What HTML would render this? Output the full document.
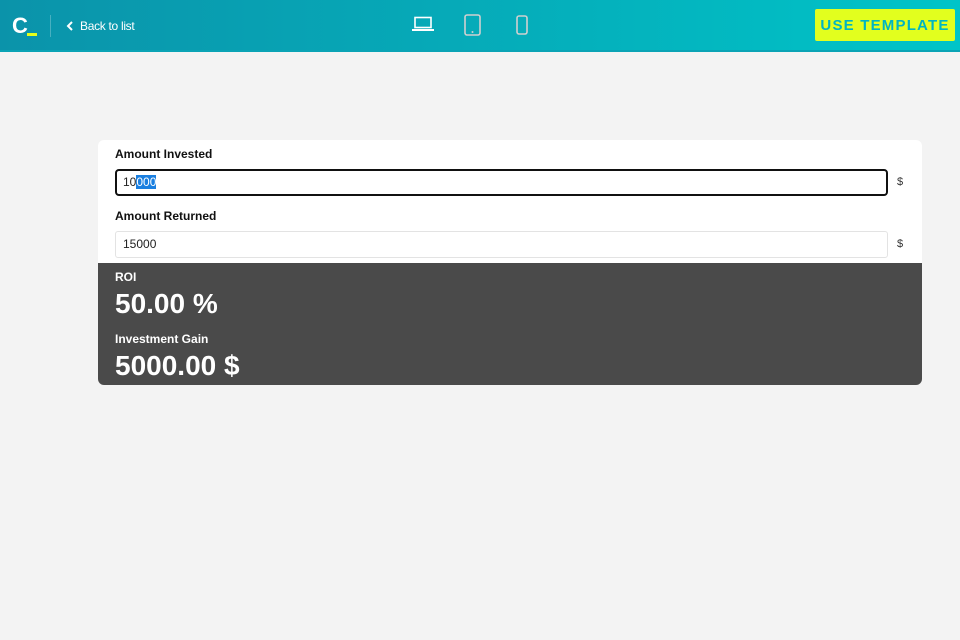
<!DOCTYPE html>
<html><head><style>
*{margin:0;padding:0;box-sizing:border-box}
body{width:960px;height:640px;background:#f3f3f3;font-family:"Liberation Sans",sans-serif;position:relative;overflow:hidden}
.hdr{position:absolute;left:0;top:0;width:960px;height:52px;background:linear-gradient(90deg,#0b93aa,#00c4c8);border-bottom:2px solid #0aa3b5}
.logo{position:absolute;left:12px;top:13px;color:#fff;font:bold 22px "Liberation Sans",sans-serif}
.logo i{position:absolute;left:15px;top:20px;width:10px;height:3px;background:#e5ff1a}
.sep{position:absolute;left:50px;top:15px;width:1px;height:22px;background:rgba(255,255,255,.25)}
.back{position:absolute;left:66px;top:19px;color:#fff;font:12px "Liberation Sans",sans-serif;letter-spacing:-.3px}
.btn{position:absolute;left:815px;top:9px;width:140px;height:32px;background:#e2ff1e;color:#00b5c3;font:bold 15px "Liberation Sans",sans-serif;letter-spacing:1.2px;text-align:center;line-height:33px;border-radius:2px}
.card{position:absolute;left:98px;top:140px;width:824px;height:245px;background:#fff;border-radius:6px;overflow:hidden}
.lbl{position:absolute;left:17px;font-weight:bold;font-size:12px;color:#111}
.inp{position:absolute;left:17px;width:773px;height:27px;border:1px solid #e3e3e3;border-radius:3px;font-size:12px;padding-left:7px;line-height:25px;color:#222}
.inp.f{border:2px solid #111;border-radius:4px;padding-left:6px;line-height:23px}
.sel{background:#1a7fe0;color:#fff}
.cur{position:absolute;left:799px;font-size:11px;color:#333}
.dark{position:absolute;left:0;top:123px;width:824px;height:122px;background:#4a4a4a;color:#fff}
.dark .a{position:absolute;left:17px;font-weight:bold;font-size:12px}
.dark .b{position:absolute;left:17px;font-weight:bold;font-size:28px}
</style></head><body>
<div class="hdr">
<div class="logo">C<i></i></div><div class="sep"></div>
<div class="back"><svg width="8" height="10" viewBox="0 0 8 10" style="margin-right:6px;vertical-align:-1px"><path d="M6 1L2 5l4 4" stroke="#fff" stroke-width="2" fill="none"/></svg>Back to list</div>
<svg style="position:absolute;left:412px;top:16px" width="22" height="16" viewBox="0 0 22 16"><rect x="3" y="1.5" width="16" height="10" fill="none" stroke="#fff" stroke-width="1.6"/><rect x="0" y="13" width="22" height="2" fill="#fff"/></svg>
<svg style="position:absolute;left:464px;top:14px" width="18" height="22" viewBox="0 0 18 22"><rect x="1" y="1" width="15" height="20" rx="2" fill="none" stroke="#d0d0d0" stroke-width="1.6"/><circle cx="8.5" cy="18" r="1" fill="#d0d0d0"/></svg>
<svg style="position:absolute;left:516px;top:15px" width="12" height="20" viewBox="0 0 12 20"><rect x="1" y="1" width="10" height="18" rx="2" fill="none" stroke="#d0d0d0" stroke-width="1.6"/></svg>
<div class="btn">USE TEMPLATE</div>
</div>
<div class="card">
<div class="lbl" style="top:7px">Amount Invested</div>
<div class="inp f" style="top:29px">10<span class="sel">000</span></div>
<div class="cur" style="top:36px">$</div>
<div class="lbl" style="top:69px">Amount Returned</div>
<div class="inp" style="top:91px">15000</div>
<div class="cur" style="top:98px">$</div>
<div class="dark">
<div class="a" style="top:7px">ROI</div>
<div class="b" style="top:25px">50.00 %</div>
<div class="a" style="top:69px">Investment Gain</div>
<div class="b" style="top:87px">5000.00 $</div>
</div>
</div>
</body></html>
